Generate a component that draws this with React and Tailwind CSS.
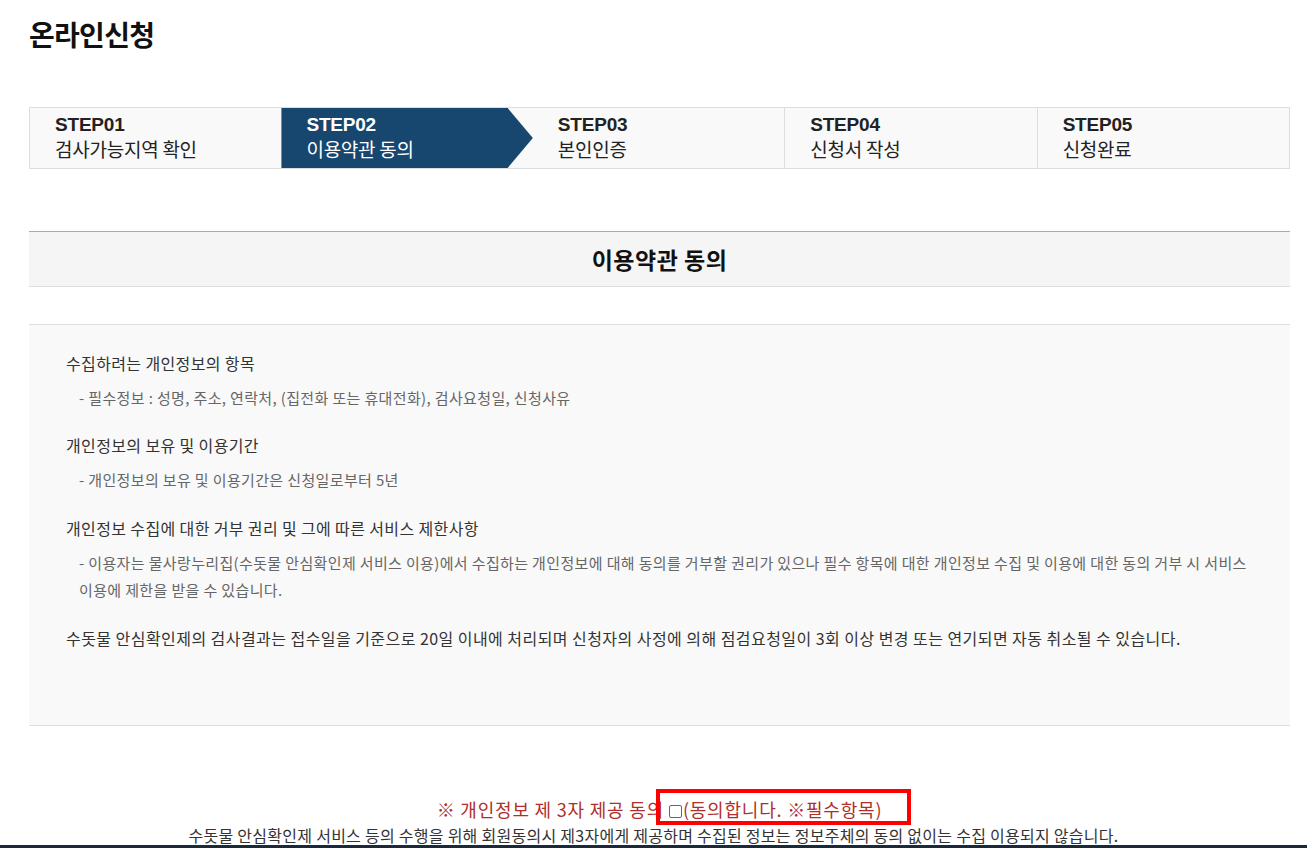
import React from 'react';

const steps = [
  { no: 'STEP01', label: '검사가능지역 확인' },
  { no: 'STEP02', label: '이용약관 동의' },
  { no: 'STEP03', label: '본인인증' },
  { no: 'STEP04', label: '신청서 작성' },
  { no: 'STEP05', label: '신청완료' },
];

const kr = "font-['Noto_Sans_CJK_KR',sans-serif]";

const App = () => {
  const active = 1;

  return (
    <div className={`relative h-[848px] overflow-hidden bg-white ${kr}`}>
      <div className="pl-[29px] pr-[17px]">
        {/* page title */}
        <h1 className="pt-[16px] text-[28px] leading-[36px] font-bold tracking-[-0.7px] text-[#111]">온라인신청</h1>

        {/* step indicator */}
        <div className="mt-[55px] flex border border-[#ddd] bg-[#f9f9f9]">
          {steps.map((s, i) => {
            const isActive = i === active;
            return (
              <div
                key={s.no}
                className={`relative flex-1 h-[60px] pl-[25px] pt-[5px] ${i > active + 1 ? 'border-l border-[#ddd]' : ''} ${
                  isActive ? 'bg-[#17466f] text-white [clip-path:polygon(0_0,90%_0,100%_50%,90%_100%,0_100%)]' : 'text-[#222]'
                }`}
              >
                <div className="font-['Liberation_Sans',sans-serif] text-[19px] leading-6 font-bold tracking-[-0.2px]">{s.no}</div>
                <div className="text-[19px] leading-6 tracking-[-0.25px]">{s.label}</div>
              </div>
            );
          })}
        </div>

        {/* section title */}
        <div className="mt-[62px] border-t border-[#aaa] border-b border-b-[#ddd] bg-[#f5f5f5] h-[56px] flex items-center justify-center">
          <h2 className="text-[23px] font-bold tracking-[0.5px] text-[#111]">이용약관 동의</h2>
        </div>

        {/* terms box */}
        <div className="mt-[37px] h-[402px] border-t border-b border-[#ddd] bg-[#f9f9f9] pl-[37px] pr-[30px] pt-[25px] text-[#333]">
          <p className="text-[16px] leading-[26px] tracking-[0.37px]">수집하려는 개인정보의 항목</p>
          <p className="mt-[8px] pl-[13px] text-[15px] leading-[27px] tracking-[0.36px] text-[#666]">
            - 필수정보 : 성명, 주소, 연락처, (집전화 또는 휴대전화), 검사요청일, 신청사유
          </p>

          <p className="mt-[21px] text-[16px] leading-[26px] tracking-[0.37px]">개인정보의 보유 및 이용기간</p>
          <p className="mt-[8px] pl-[13px] text-[15px] leading-[27px] tracking-[0.36px] text-[#666]">
            - 개인정보의 보유 및 이용기간은 신청일로부터 5년
          </p>

          <p className="mt-[22px] text-[16px] leading-[26px] tracking-[0.37px]">개인정보 수집에 대한 거부 권리 및 그에 따른 서비스 제한사항</p>
          <p className="mt-[8px] pl-[13px] text-[15px] leading-[27px] tracking-[0.36px] text-[#666]">
            - 이용자는 물사랑누리집(수돗물 안심확인제 서비스 이용)에서 수집하는 개인정보에 대해 동의를 거부할 권리가 있으나 필수 항목에 대한 개인정보 수집 및 이용에 대한 동의 거부 시 서비스 이용에 제한을 받을 수 있습니다.
          </p>

          <p className="mt-[22px] text-[16px] leading-[26px] tracking-[0.45px]">
            수돗물 안심확인제의 검사결과는 접수일을 기준으로 20일 이내에 처리되며 신청자의 사정에 의해 점검요청일이 3회 이상 변경 또는 연기되면 자동 취소될 수 있습니다.
          </p>
        </div>

        {/* consent */}
        <div className="mt-[70px] text-center">
          <p className="text-[18px] leading-[26px] tracking-[0.8px] text-[#b02f2a]">
            ※ 개인정보 제 3자 제공 동의{' '}
            <span className="relative inline-block">
              <span className="inline-block w-[13px] h-[13px] border border-[#666] rounded-[2px] bg-white align-[-1px] mr-[1px]" />
              (동의합니다. ※필수항목)
              <span className="absolute left-[-13px] right-[-29px] top-[-7px] bottom-[-3px] border-4 border-[#ff0000]" />
            </span>
          </p>
          <p className="pr-[12px] text-[16px] leading-[26px] tracking-[0.27px] text-[#333]">
            수돗물 안심확인제 서비스 등의 수행을 위해 회원동의시 제3자에게 제공하며 수집된 정보는 정보주체의 동의 없이는 수집 이용되지 않습니다.
          </p>
        </div>
      </div>

      {/* footer edge */}
      <div className="absolute bottom-0 left-0 right-0 h-[3px] bg-[#1b2a3b]" />
    </div>
  );
};

export default App;
